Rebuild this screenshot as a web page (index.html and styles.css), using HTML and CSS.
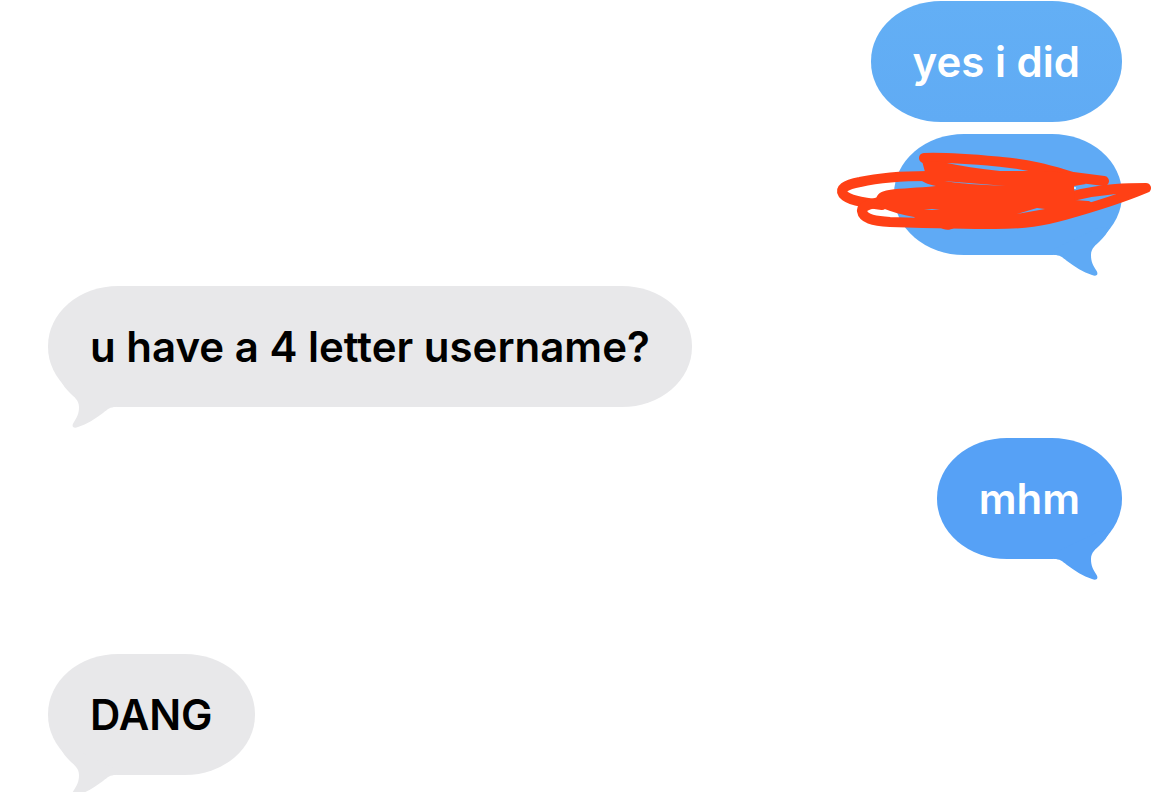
FILE: index.html
```
<!DOCTYPE html>
<html lang="en">
<head>
    <meta charset="UTF-8">
    <meta name="viewport" content="width=device-width, initial-scale=1.0">
    <title>Messages</title>
    <link rel="stylesheet" href="styles.css">
</head>
<body>
    <!-- shared tail shape, flipped in CSS for received messages -->
    <svg class="defs" width="0" height="0" aria-hidden="true">
        <symbol id="tail" viewBox="0 0 70 50">
            <path d="M2 22 L2 28 C8 28 10 30 15 34 C23 40 31 45 40 48 C45 50 47 47 44 43 C41 38 39 35 39 28 C39 21 44 18 48 14 C52 10 55 6 58 1 L48 0 Z" fill="currentColor"/>
        </symbol>
    </svg>

    <main class="chat">
        <div class="group sent">
            <div class="bubble first">yes i did</div>
            <div class="bubble hidden-message">
                <svg class="tail" aria-hidden="true"><use href="#tail"/></svg>
                <svg class="scribble" viewBox="0 0 330 90" aria-hidden="true">
                    <g fill="none" stroke="#ff4015" stroke-width="10" stroke-linecap="round" stroke-linejoin="round">
                        <path d="M94 13 C120 12 150 15 172 17 C205 20 225 27 243 32 L274 36"/>
                        <path d="M98 31 C70 31 48 33 30 37 C14 40 10 44 13 49 C18 55 30 57 52 60"/>
                        <path d="M58 56 C42 58 31 61 32 66 C33 73 42 76 60 77 C95 78 135 79 165 79 C195 79 213 76 235 70 C260 63 290 54 316 43 C300 43 275 43 243 51"/>
                        <path d="M257 61 L225 61"/>
                    </g>
                    <path fill="#ff4015" fill-rule="evenodd" d="M92 16 L112 17 C130 21 150 24 170 26 L212 26 L243 28 L256 39 L244 41 L245 55 L258 56 C263 57 265 61 262 65 L222 77 C200 82 180 83 124 83 C119 86 113 85 110 82 L92 80 L84 72 C72 70 62 67 52 63 L46 54 C47 49 51 46 59 45 C72 43 88 43 106 41 C97 39 92 37 89 33 L95 27 Z M187 69 L215 64 L207 63 Z M94 65 L110 65 L102 64 Z M113 36 C125 38 150 40 176 41 C155 39 135 38 113 36 Z"/>
                    <circle cx="245" cy="43" r="1" fill="#fff"/>
                </svg>
            </div>
        </div>

        <div class="group received">
            <div class="bubble">
                u have a 4 letter username?
                <svg class="tail" aria-hidden="true"><use href="#tail"/></svg>
            </div>
        </div>

        <div class="group sent">
            <div class="bubble last">
                mhm
                <svg class="tail" aria-hidden="true"><use href="#tail"/></svg>
            </div>
        </div>

        <div class="group received later">
            <div class="bubble">
                DANG
                <svg class="tail" aria-hidden="true"><use href="#tail"/></svg>
            </div>
        </div>
    </main>
</body>
</html>
```
FILE: styles.css
```
* {
    box-sizing: border-box;
    margin: 0;
    padding: 0;
}

body {
    font-family: Inter, "Liberation Sans", sans-serif;
    font-size: 42px;
    font-weight: 600;
    line-height: 56px;
    background: #fff;
    color: #000;
}

.defs {
    position: absolute;
}

.chat {
    display: flex;
    flex-direction: column;
    gap: 31px;
    padding: 1px 48px 17px;
    overflow: hidden;
}

.group {
    display: flex;
    flex-direction: column;
    gap: 12px;
}

.sent {
    align-items: flex-end;
}

.received {
    align-items: flex-start;
}

.later {
    margin-top: 64px;
}

.bubble {
    position: relative;
    min-height: 121px;
    padding: 33px 42px 32px;
    border-radius: 70px / 60px;
}

.sent .bubble {
    color: #fff;
    background: #5faaf5;
}

.sent .first {
    background: linear-gradient(#63aff5, #60abf4);
}

.sent .last {
    background: #56a1f6;
}

.received .bubble {
    background: #e8e8ea;
}

.hidden-message {
    width: 228px;
}

.tail {
    position: absolute;
    right: 0;
    bottom: -22px;
    width: 70px;
    height: 50px;
    color: #5faaf5;
}

.last .tail {
    color: #56a1f6;
}

.received .tail {
    right: auto;
    left: 0;
    color: #e8e8ea;
    transform: scaleX(-1);
}

.scribble {
    position: absolute;
    top: 11px;
    right: -38px;
    width: 330px;
    height: 90px;
}
```
